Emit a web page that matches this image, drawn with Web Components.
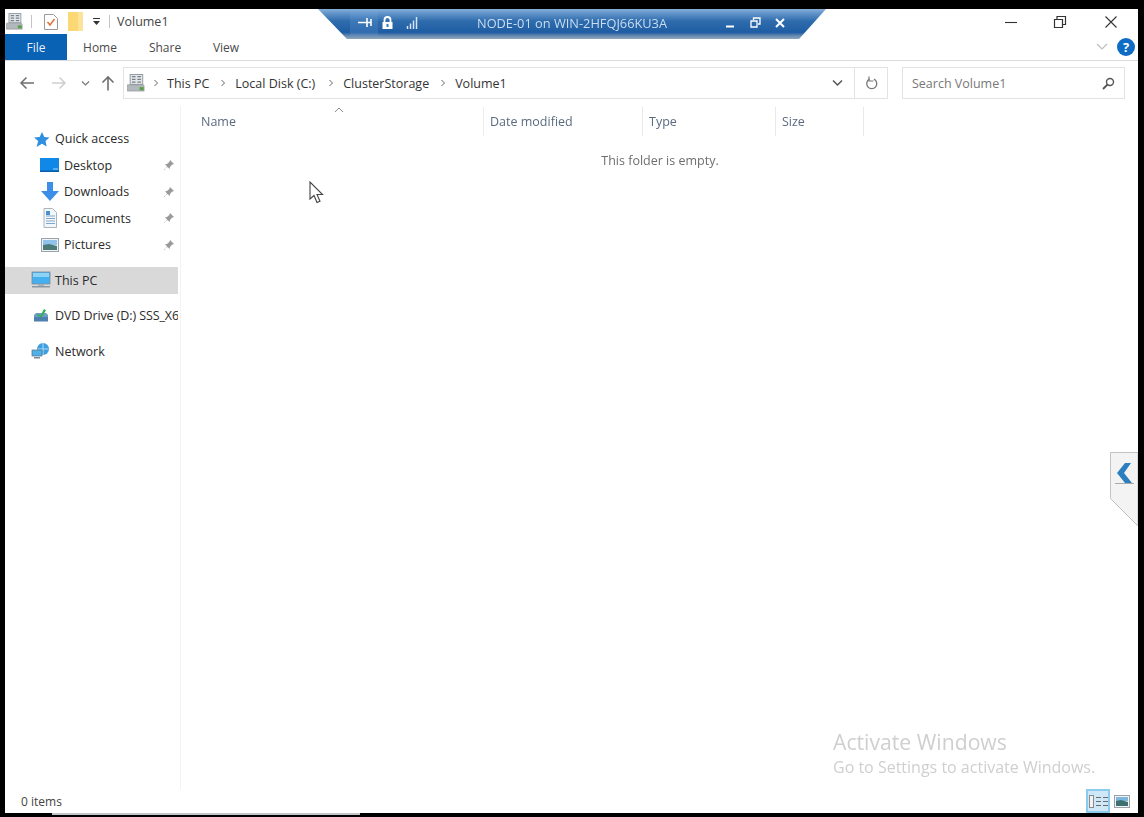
<!DOCTYPE html>
<html lang="en">
<head>
<meta charset="utf-8">
<title>Volume1</title>
<style>
	html, body { margin: 0; height: 100%; background: #000; overflow: hidden; }
	body { font: 12.5px "Open Sans", "Noto Sans", sans-serif; color: #333; }
</style>
</head>
<body>

<explorer-window>
	<title-row slot="top" heading="Volume1"></title-row>
	<ribbon-tabs slot="top"></ribbon-tabs>
	<address-row slot="top"></address-row>

	<nav-pane slot="side">
		<nav-item icon="star" gap="0">Quick access</nav-item>
		<nav-item icon="desktop" indent pinned>Desktop</nav-item>
		<nav-item icon="down" indent pinned>Downloads</nav-item>
		<nav-item icon="doc" indent pinned>Documents</nav-item>
		<nav-item icon="pic" indent pinned>Pictures</nav-item>
		<nav-item icon="pc" selected gap="9">This PC</nav-item>
		<nav-item icon="dvd" gap="9" tight>DVD Drive (D:) SSS_X6</nav-item>
		<nav-item icon="net" gap="9">Network</nav-item>
	</nav-pane>

	<file-list></file-list>
	<status-row slot="bottom"></status-row>
</explorer-window>
<task-strip></task-strip>

<connection-bar label="NODE-01 on WIN-2HFQJ66KU3A"></connection-bar>
<side-tab></side-tab>
<activate-mark></activate-mark>
<mouse-cursor></mouse-cursor>

<script>
const ICONS = {
	star: `<path d="M11 3l2.300 5 5.200.5-4 3.500 1.200 5.500-4.700-2.800L5.500 18l1.700-6L3 8.500 8.700 8z" fill="#2f8fe0"/>`,
	desktop: `<rect x="0" y="3" width="19" height="14" fill="#0f88e8"/><rect x="0" y="15.500" width="19" height="1.500" fill="#0a5da8"/><rect x="13" y="13.500" width="5" height="1" fill="#9fd4f7"/>`,
	down: `<path d="M7 0h6v9h6l-9 10L1 9h6z" fill="#3c8fe6"/>`,
	doc: `<path d="M4 .5h8.500l4 4v15H4z" fill="#f4f7fa" stroke="#a9b4bf"/><path d="M6 8h9M6 10.500h9M6 13h9M6 15.500h9" stroke="#7ea6c8"/><rect x="6" y="3" width="4" height="4" fill="#4a90d0"/>`,
	pic: `<rect x="1.500" y="3.500" width="17" height="13" fill="#f1f3f5" stroke="#9aa3ab"/><rect x="3" y="5" width="14" height="5" fill="#8fc3ea"/><path d="M3 10l6-1 8 2v4H3z" fill="#4c7a78"/>`,
	pc: `<rect x="1" y="2" width="18" height="12" fill="#45b0f0" stroke="#7d8a96" stroke-width=".8"/><rect x="2" y="3" width="16" height="4" fill="#8fd2f8"/><rect x="7" y="14" width="6" height="2" fill="#a7b0b8"/><rect x="1" y="16" width="18" height="1.500" fill="#8c99a5"/>`,
	dvd: `<path d="M3 9l2-2h10l2 2v6H3z" fill="#6f9cc6"/><rect x="3" y="11" width="14" height="4.500" fill="#4f7fae"/><path d="M7 8l2.500 1.500L13 3l2 1.200-4.500 7L6 9.500z" fill="#32b04a"/>`,
	net: `<circle cx="12" cy="8" r="6" fill="#3f9fe0"/><path d="M6.500 8h11M12 2v12" stroke="#a8dcf7"/><rect x="1" y="9" width="10" height="6" fill="#4fb0ea" stroke="#5b6f80" stroke-width=".7"/><rect x="3" y="16" width="6" height="1.500" fill="#7b8894"/>`,
	drive: `<rect x="3.500" y=".5" width="14" height="11" fill="#e4e7e9" stroke="#8b949b"/><path d="M5.500 3h4M11.500 3h4M5.500 6h4M11.500 6h4M5.500 9h4M11.500 9h4" stroke="#77808a" stroke-width="1.400"/><path d="M.5 12H18l1 1v6H.5z" fill="#b2b8bb" stroke="#7f878c" stroke-width=".6"/><rect x="14" y="14.500" width="4.500" height="3.500" fill="#58a14a"/>`
};

const svg = (name, size = 20) => `<svg class="icon" width="${size}" height="${size}" viewBox="0 0 20 20" aria-hidden="true">${ICONS[name]}</svg>`;

class ExplorerWindow extends HTMLElement {
	constructor() {
		super();
		this.attachShadow({ mode: 'open' });
		this.shadowRoot.innerHTML = `
			<style>
				:host {
					display: flex;
					flex-direction: column;
					height: 804px;
					margin: 9px 6px 0 5px;
					background: #fff;
					filter: blur(.45px);
				}
				.main { flex: 1; display: flex; min-height: 0; }
			</style>
			<slot name="top"></slot>
			<div class="main"><slot name="side"></slot><slot></slot></div>
			<slot name="bottom"></slot>
		`;
	}
}

class TitleRow extends HTMLElement {
	constructor() {
		super();
		this.attachShadow({ mode: 'open' });
		this.shadowRoot.innerHTML = `
			<style>
				:host { display: flex; align-items: center; height: 25px; color: #444; }
				.qat { display: flex; align-items: center; flex: 1; }
				.bar { width: 1px; height: 13px; background: #c4c4c4; }
				.name { margin-left: 7px; font-size: 12.5px; }
				.win { display: flex; }
				.win svg { display: block; }
				.win span { display: flex; justify-content: center; }
			</style>
			<div class="qat">
				<span style="margin-left:1px;display:flex">${svg('drive', 17)}</span>
				<span class="bar" style="margin-left:8px"></span>
				<svg style="margin-left:11px" width="16" height="18" viewBox="0 0 16 18"><path d="M1.500 1.500h9l4 4v11h-13z" fill="#fff" stroke="#9a9a9a"/><path d="M4.500 9l2.500 3 4.500-6" fill="none" stroke="#e0713a" stroke-width="1.500"/></svg>
				<svg style="margin-left:9px" width="15" height="19" viewBox="0 0 15 19"><rect width="15" height="19" fill="#fbd873"/><path d="M10 0h5v19h-5z" fill="#fce39a"/></svg>
				<svg style="margin-left:9px" width="9" height="9" viewBox="0 0 9 9"><path d="M1 1.500h7" stroke="#333"/><path d="M1 4h7L4.500 8z" fill="#333"/></svg>
				<span class="bar" style="margin-left:8px"></span>
				<span class="name">${this.getAttribute('heading')}</span>
			</div>
			<div class="win">
				<span style="width:46px"><svg width="14" height="14" viewBox="0 0 14 14"><path d="M1 7.500h12" stroke="#333" stroke-width="1.100"/></svg></span>
				<span style="width:52px"><svg width="14" height="14" viewBox="0 0 14 14"><path d="M1.500 4.500h8v8h-8zM4 4.500V1.500h8.500v8h-3" fill="none" stroke="#333" stroke-width="1.200"/></svg></span>
				<span style="width:50px;margin-right:2px"><svg width="14" height="14" viewBox="0 0 14 14"><path d="M1.500 1.500l11 11M12.500 1.500l-11 11" stroke="#333" stroke-width="1.100"/></svg></span>
			</div>
		`;
	}
}

class RibbonTabs extends HTMLElement {
	constructor() {
		super();
		this.attachShadow({ mode: 'open' });
		this.shadowRoot.innerHTML = `
			<style>
				:host { display: flex; align-items: center; height: 26px; border-bottom: 1px solid #dadbdc; color: #4a4a4a; font-size: 12px; }
				.file { width: 62px; height: 100%; display: flex; align-items: center; justify-content: center; background: #0a62b5; color: #e6f0fa; }
				.tab { width: 48px; text-align: center; }
				.space { flex: 1; }
				.help { width: 18px; height: 18px; margin: 0 3px 0 9px; border-radius: 50%; background: #0f6cc4; color: #fff; font-weight: 700; font-size: 13px; line-height: 18px; text-align: center; }
			</style>
			<div class="file">File</div>
			<div class="tab" style="margin-left:9px">Home</div>
			<div class="tab" style="margin-left:17px">Share</div>
			<div class="tab" style="margin-left:13px">View</div>
			<div class="space"></div>
			<svg width="12" height="8" viewBox="0 0 12 8"><path d="M1 1l5 5 5-5" fill="none" stroke="#bdbdbd" stroke-width="1.200"/></svg>
			<div class="help">?</div>
		`;
	}
}

class AddressRow extends HTMLElement {
	constructor() {
		super();
		this.attachShadow({ mode: 'open' });
		const sep = `<svg class="sep" width="6" height="8" viewBox="0 0 6 8"><path d="M1.500 1l3 3-3 3" fill="none" stroke="#666"/></svg>`;
		this.shadowRoot.innerHTML = `
			<style>
				:host { display: flex; align-items: center; height: 45px; padding-bottom: 1px; box-sizing: border-box; color: #333; font-size: 12.5px; }
				.nav { width: 118px; flex: none; display: flex; align-items: center; padding-left: 14px; box-sizing: border-box; }
				.box { height: 32px; box-sizing: border-box; display: flex; align-items: center; border: 1px solid #e3e3e3; }
				.path { width: 765px; flex: none; }
				.crumbs { flex: 1; display: flex; align-items: center; padding-left: 3px; }
				.sep { margin: 0 9px 0 11px; }
				.first { margin: 0 8px 0 8px; }
				.wide { margin-right: 2px; }
				.btn { width: 33px; height: 100%; display: flex; align-items: center; justify-content: center; border-left: 1px solid #e3e3e3; box-sizing: border-box; }
				.btn.plain { border: 0; }
				.search { flex: none; width: 223px; margin-left: 14px; padding: 0 9px; justify-content: space-between; color: #777; }
			</style>
			<div class="nav">
				<svg width="16" height="14" viewBox="0 0 16 14"><path d="M15 7H2M7.500 1.500L2 7l5.500 5.500" fill="none" stroke="#6f6f6f" stroke-width="1.500"/></svg>
				<svg style="margin-left:16px" width="16" height="14" viewBox="0 0 16 14"><path d="M1 7h13M8.500 1.500L14 7l-5.500 5.500" fill="none" stroke="#cfcfcf" stroke-width="1.500"/></svg>
				<svg style="margin-left:14px" width="9" height="7" viewBox="0 0 9 7"><path d="M1 1.500l3.500 3.500L8 1.500" fill="none" stroke="#777" stroke-width="1.200"/></svg>
				<svg style="margin-left:11px" width="14" height="16" viewBox="0 0 14 16"><path d="M7 15.500V2M1.500 7.500L7 2l5.500 5.500" fill="none" stroke="#6f6f6f" stroke-width="1.600"/></svg>
			</div>
			<div class="box path">
				<div class="crumbs">
					${svg('drive', 18)}${sep.replace('class="sep"', 'class="first"')}<span>This PC</span>${sep}<span class="wide">Local Disk (C:)</span>${sep}<span>ClusterStorage</span>${sep}<span>Volume1</span>
				</div>
				<div class="btn plain"><svg width="11" height="8" viewBox="0 0 11 8"><path d="M1 1.500l4.500 4.500L10 1.500" fill="none" stroke="#555" stroke-width="1.500"/></svg></div>
				<div class="btn"><svg width="13" height="14" viewBox="0 0 13 14"><path d="M4.500 3.200a5 5 0 1 0 4.500 0" fill="none" stroke="#777" stroke-width="1.300"/><path d="M4 .5v4.500h4.500" fill="none" stroke="#777" stroke-width="1.200"/></svg></div>
			</div>
			<div class="box search">
				<span>Search Volume1</span>
				<svg width="13" height="13" viewBox="0 0 13 13"><circle cx="8" cy="5" r="3.500" fill="none" stroke="#555" stroke-width="1.400"/><path d="M5.500 7.500L1 12" stroke="#555" stroke-width="1.800"/></svg>
			</div>
		`;
	}
}

class NavPane extends HTMLElement {
	constructor() {
		super();
		this.attachShadow({ mode: 'open' });
		this.shadowRoot.innerHTML = `
			<style>
				:host { display: block; width: 176px; flex: none; padding-top: 19.5px; box-sizing: border-box; border-right: 1px solid #f3f3f3; overflow: hidden; }
			</style>
			<slot></slot>
		`;
	}
}

class NavItem extends HTMLElement {
	constructor() {
		super();
		this.attachShadow({ mode: 'open' });
		const indent = this.hasAttribute('indent');
		const selected = this.hasAttribute('selected');
		this.shadowRoot.innerHTML = `
			<style>
				:host {
					display: flex;
					align-items: center;
					height: 26.5px;
					width: 173px;
					margin-top: ${this.getAttribute('gap') || 0}px;
					padding-left: ${indent ? 35 : 26}px;
					box-sizing: border-box;
					background: ${selected ? '#d9d9d9' : 'transparent'};
					color: #2b2b2b;
					font-size: 12.5px;
					white-space: nowrap;
					position: relative;
					overflow: hidden;
				}
				.icon { flex: none; margin-right: 4px; }
				span { ${this.hasAttribute('tight') ? 'letter-spacing: -.1px;' : ''} }
				.pin { position: absolute; right: 3px; top: 7px; }
			</style>
			${svg(this.getAttribute('icon'))}
			<span><slot></slot></span>
			${this.hasAttribute('pinned') ? `<svg class="pin" width="12" height="12" viewBox="0 0 12 12"><path d="M7 1l4 4-2 .7-2 2.300-.3 2L4 7.500 1.500 11 1 10.500 4.500 8 2 5.300 4 5l2.300-2z" fill="#9a9a9a"/></svg>` : ''}
		`;
	}
}

class FileList extends HTMLElement {
	constructor() {
		super();
		this.attachShadow({ mode: 'open' });
		this.shadowRoot.innerHTML = `
			<style>
				:host { display: block; flex: 1; position: relative; }
				.head { display: grid; grid-template-columns: 303px 159px 133px 88px; height: 29px; margin-top: 1px; color: #5a6b80; font-size: 12.5px; }
				.head div { display: flex; align-items: center; padding-left: 6px; border-right: 1px solid #e9e9e9; box-sizing: border-box; }
				.head div:first-child { padding-left: 20px; border-right-color: #ececec; }
				.caret { position: absolute; left: 153px; top: 1px; }
				.empty { margin-top: 16px; text-align: center; color: #6e6e6e; font-size: 12.5px; width: 958px; }
			</style>
			<div class="head"><div>Name</div><div>Date modified</div><div>Type</div><div>Size</div></div>
			<svg class="caret" width="10" height="6" viewBox="0 0 10 6"><path d="M1 5l4-4 4 4" fill="none" stroke="#8c8c8c"/></svg>
			<div class="empty">This folder is empty.</div>
		`;
	}
}

class StatusRow extends HTMLElement {
	constructor() {
		super();
		this.attachShadow({ mode: 'open' });
		this.shadowRoot.innerHTML = `
			<style>
				:host { display: flex; align-items: flex-end; height: 24px; padding-left: 16px; color: #444; font-size: 12px; }
				.text { flex: 1; line-height: 23px; }
				.view { width: 24px; height: 24px; display: flex; align-items: center; justify-content: center; box-sizing: border-box; }
				.on { background: #cfe8f8; border: 2px solid #8ccbee; }
			</style>
			<div class="text">0 items</div>
			<div class="view on">
				<svg width="19" height="13" viewBox="0 0 19 13"><rect x=".5" y=".5" width="4" height="12" fill="#f3f3f3" stroke="#8a8a8a"/><path d="M7 2.500h5M14 2.500h5M7 6.500h5M14 6.500h5M7 10.500h5M14 10.500h5" stroke="#6b6b6b"/></svg>
			</div>
			<div class="view" style="margin:0 4px 0 0">
				<svg width="16" height="13" viewBox="0 0 16 13"><rect x=".5" y=".5" width="15" height="12" fill="#f1f3f5" stroke="#9aa3ab"/><rect x="2" y="2" width="12" height="4" fill="#7fb6df"/><path d="M2 6l5-1 7 2v4H2z" fill="#3f7070"/></svg>
			</div>
		`;
	}
}

class TaskStrip extends HTMLElement {
	constructor() {
		super();
		this.attachShadow({ mode: 'open' });
		this.shadowRoot.innerHTML = `
			<style>
				:host { display: block; height: 2px; margin: 0 784px 0 52px; background: #c3c6c8; }
			</style>
		`;
	}
}

class ConnectionBar extends HTMLElement {
	constructor() {
		super();
		this.attachShadow({ mode: 'open' });
		this.shadowRoot.innerHTML = `
			<style>
				:host {
					position: absolute;
					left: 318px;
					top: 9px;
					width: 508px;
					height: 30px;
					display: flex;
					align-items: center;
					box-sizing: border-box;
					padding-bottom: 3px;
					clip-path: polygon(0 0, 100% 0, 94.7% 100%, 5.7% 100%);
					background: linear-gradient(#86aed8 0, #5e92c8 16%, #2f6cad 40%, #1f5da3 78%, #6a8cb0 90%, #8fa7bf 100%);
					color: #d6e4f3;
					font-size: 12.8px;
					filter: blur(.3px);
				}
				.pin { width: 28px; height: 26px; margin-left: 32px; display: flex; align-items: center; justify-content: center; background: rgba(120,170,225,.2); }
				.left { display: flex; align-items: center; width: 154px; flex: none; }
				.label { width: 190px; flex: none; text-align: center; color: #c9dcf0; white-space: nowrap; margin-left: 5px; }
				.right { display: flex; align-items: center; margin-left: 58px; }
			</style>
			<div class="left">
				<div class="pin"><svg width="15" height="11" viewBox="0 0 15 11"><path d="M1 5.500h9M10 1v9M14 2v7M10.500 5.500h3" stroke="#fff" stroke-width="1.600"/></svg></div>
				<svg style="margin-left:3px" width="13" height="14" viewBox="0 0 13 14"><path d="M3.500 6V4a3 3 0 0 1 6 0v2" fill="none" stroke="#fff" stroke-width="1.800"/><path d="M1.500 6h10v7h-10z" fill="#fff"/><rect x="5.500" y="8" width="2" height="3" fill="#3f78b5"/></svg>
				<svg style="margin-left:12px" width="13" height="13" viewBox="0 0 13 13"><path d="M1.500 10v3M4.500 7.500V13M7.500 4.500V13M10.500 1V13" stroke="#d6e4f3" stroke-width="1.500"/></svg>
			</div>
			<div class="label">${this.getAttribute('label')}</div>
			<div class="right">
				<svg width="10" height="10" viewBox="0 0 10 10"><path d="M1 8.500h8" stroke="#fff" stroke-width="2"/></svg>
				<svg style="margin-left:15px" width="11" height="11" viewBox="0 0 11 11"><path d="M1 4h6v6H1zM3.500 3V1h6.500v6H8" fill="none" stroke="#fff" stroke-width="1.300"/></svg>
				<svg style="margin-left:14px" width="10" height="10" viewBox="0 0 10 10"><path d="M1 1l8 8M9 1l-8 8" stroke="#fff" stroke-width="2"/></svg>
			</div>
		`;
	}
}

class SideTab extends HTMLElement {
	constructor() {
		super();
		this.attachShadow({ mode: 'open' });
		this.shadowRoot.innerHTML = `
			<style>
				:host { position: absolute; left: 1110px; top: 452px; display: block; width: 28px; height: 75px; filter: blur(.3px); }
			</style>
			<svg width="28" height="75" viewBox="0 0 28 75">
				<path d="M28 .5H.5v46L28 74z" fill="#f3f3f3" stroke="#c2c2c2"/>
				<path d="M15 11L7 21l8 10h7l-8-10 7-10z" fill="#2b7fc0"/>
				<path d="M5 31.500h19" stroke="#a8a8a8"/>
			</svg>
		`;
	}
}

class ActivateMark extends HTMLElement {
	constructor() {
		super();
		this.attachShadow({ mode: 'open' });
		this.shadowRoot.innerHTML = `
			<style>
				:host { position: absolute; left: 833px; top: 729px; display: block; color: #cfcfcf; white-space: nowrap; filter: blur(.3px); }
				.big { font-size: 21.2px; line-height: 26px; }
				.small { font-size: 16px; line-height: 24px; }
			</style>
			<div class="big">Activate Windows</div>
			<div class="small">Go to Settings to activate Windows.</div>
		`;
	}
}

class MouseCursor extends HTMLElement {
	constructor() {
		super();
		this.attachShadow({ mode: 'open' });
		this.shadowRoot.innerHTML = `
			<style>
				:host { position: absolute; left: 309px; top: 181px; display: block; width: 15px; height: 23px; }
			</style>
			<svg width="15" height="23" viewBox="0 0 15 23"><path d="M1 1v17l4-3.500 3 7 3-1.300-3-6.700h5.500z" fill="#fff" stroke="#444" stroke-width="1.100"/></svg>
		`;
	}
}

customElements.define('explorer-window', ExplorerWindow);
customElements.define('title-row', TitleRow);
customElements.define('ribbon-tabs', RibbonTabs);
customElements.define('address-row', AddressRow);
customElements.define('nav-pane', NavPane);
customElements.define('nav-item', NavItem);
customElements.define('file-list', FileList);
customElements.define('status-row', StatusRow);
customElements.define('task-strip', TaskStrip);
customElements.define('connection-bar', ConnectionBar);
customElements.define('side-tab', SideTab);
customElements.define('activate-mark', ActivateMark);
customElements.define('mouse-cursor', MouseCursor);
</script>
</body>
</html>
